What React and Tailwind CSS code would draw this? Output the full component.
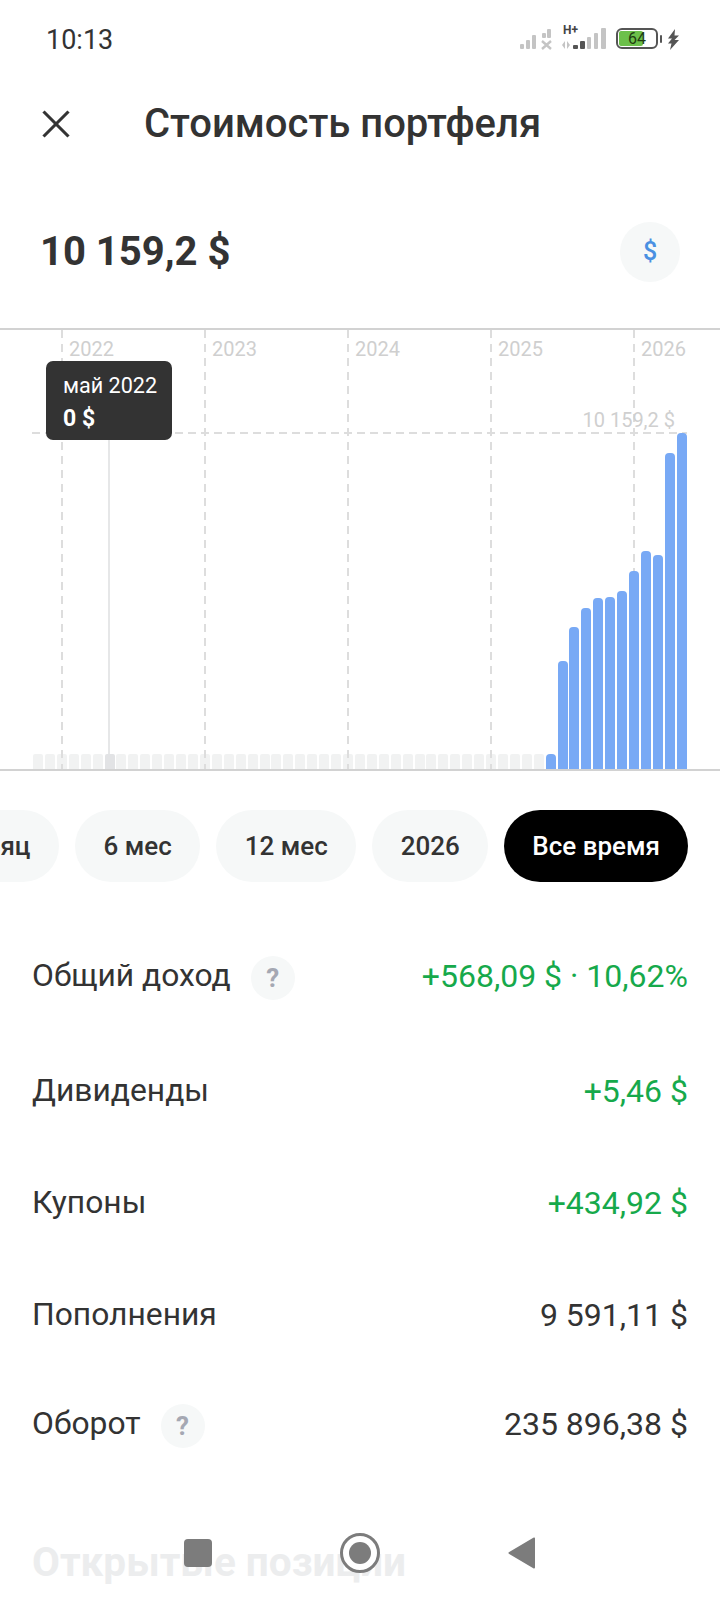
import React from 'react';
import { X } from 'lucide-react';

const years = [
  { label: '2022', left: 'left-[61px]' },
  { label: '2023', left: 'left-[204px]' },
  { label: '2024', left: 'left-[347px]' },
  { label: '2025', left: 'left-[490px]' },
  { label: '2026', left: 'left-[633px]' },
];

// heights in px from the chart baseline
const blueBars = [15, 108, 142, 161, 171, 172, 178, 198, 218, 214, 316, 336];
const greyBars = Array.from({ length: 43 }, (_, i) => i);

const periods = ['месяц', '6 мес', '12 мес', '2026'];

const rows = [
  { label: 'Общий доход', value: '+568,09 $ · 10,62%', green: true, hint: true, height: 'h-[114px]' },
  { label: 'Дивиденды', value: '+5,46 $', green: true, height: 'h-[115px]' },
  { label: 'Купоны', value: '+434,92 $', green: true, height: 'h-[110px]' },
  { label: 'Пополнения', value: '9 591,11 $', height: 'h-[114px]' },
  { label: 'Оборот', value: '235 896,38 $', hint: true, height: 'h-[104px]' },
];

const dashV = 'bg-[repeating-linear-gradient(to_bottom,#dddddd_0,#dddddd_8px,transparent_8px,transparent_14px)]';

function StatusIcons() {
  return (
    <div className="flex items-start">
      <svg width="90" height="32" viewBox="0 0 90 32" className="mr-[7px]">
        <g fill="#c4c4c4">
          <rect x="1" y="24" width="4" height="5" rx="1" />
          <rect x="7" y="20" width="4" height="9" rx="1" />
          <rect x="13" y="15" width="4" height="14" rx="1" />
          <rect x="23" y="13" width="4" height="5" rx="1" />
          <rect x="28" y="9" width="4" height="9" rx="1" />
        </g>
        <path d="M23 21l9 8M32 21l-9 8" stroke="#c4c4c4" strokeWidth="2.4" />
        <text x="44" y="14" fontSize="12" fontWeight="700" fill="#444444">H+</text>
        <path d="M46 21l-3 4 3 4zM48 21l3 4-3 4z" fill="#c4c4c4" />
        <rect x="54" y="25" width="5" height="4" rx="1" fill="#555555" />
        <rect x="61" y="21" width="5" height="8" rx="1" fill="#555555" />
        <rect x="68" y="17" width="4" height="12" rx="1" fill="#c4c4c4" />
        <rect x="75" y="13" width="4" height="16" rx="1" fill="#c4c4c4" />
        <rect x="82" y="8" width="5" height="21" rx="1" fill="#c4c4c4" />
      </svg>
      <div className="relative mt-[8px] flex h-[21px] w-[42px] items-center justify-center overflow-hidden rounded-[6px] border-2 border-[#555555]">
        <div className="absolute inset-y-[1px] left-[1px] w-[24px] rounded-[2px] bg-[#6cc04a]" />
        <span className="relative text-[16px] leading-none text-[#1f3d10]">64</span>
      </div>
      <div className="ml-[2px] mt-[15px] h-[8px] w-[2px] rounded-sm bg-[#555555]" />
      <svg width="13" height="21" viewBox="0 0 13 21" className="ml-[5px] mt-[9px]">
        <path d="M8 0L1 9.5h4L1 14.5h3.5L3 21l9-10H7.5L12 6.5H7.5z" fill="#555555" />
      </svg>
    </div>
  );
}

function HintButton() {
  return (
    <div className="ml-[20px] mt-[4px] flex h-[44px] w-[44px] items-center justify-center rounded-full bg-[#f6f8f8] text-[26px] font-bold leading-none text-[#a5a8b3]">
      ?
    </div>
  );
}

function Chart() {
  return (
    <div className="relative h-[443px] border-y-2 border-[#d2d2d2]">
      <div className="flex h-full items-end gap-[1.93px] pl-[33px]">
        {greyBars.map((i) => (
          <div
            key={i}
            className={`h-[15px] w-[10px] shrink-0 rounded-t-[2px] ${i === 6 ? 'bg-[#e2e3e5]' : 'bg-[#f1f2f2]'}`}
          />
        ))}
        {blueBars.map((h, i) => (
          <div
            key={i}
            className="relative z-10 w-[10px] shrink-0 rounded-t-[4px] bg-[#78a9f5]"
            style={{ height: h }}
          />
        ))}
      </div>

      {years.map((y) => (
        <React.Fragment key={y.label}>
          <div className={`absolute top-0 bottom-0 w-[2px] ${y.left} ${dashV}`} />
          <span className={`absolute top-[6px] ml-[8px] text-[20px] leading-[26px] text-[#cfcfcf] ${y.left}`}>
            {y.label}
          </span>
        </React.Fragment>
      ))}

      <div className="absolute left-[32px] right-[33px] top-[102px] h-[2px] bg-[repeating-linear-gradient(to_right,#dddddd_0,#dddddd_8px,transparent_8px,transparent_13px)]" />
      <span className="absolute right-[45px] top-[77px] text-[20px] leading-[26px] text-[#cfcfcf]">10 159,2 $</span>

      <div className="absolute left-[108px] top-[110px] bottom-[15px] w-[2px] bg-[#e6e7e8]" />

      <div className="absolute left-[46px] top-[31px] z-20 flex h-[79px] w-[126px] flex-col justify-center gap-[5px] rounded-[7px] bg-[#333333] pl-[17px] pt-[3px] text-white">
        <span className="text-[21.6px] leading-[28px]">май 2022</span>
        <span className="text-[23px] font-bold leading-[28px]">0 $</span>
      </div>
    </div>
  );
}

export default function App() {
  return (
    <div className="relative h-[1600px] w-[720px] overflow-hidden bg-white font-['Roboto',sans-serif] text-[#333333]">
      {/* status bar */}
      <div className="flex h-[80px] items-start justify-between pl-[46px] pr-[40px] pt-[20px]">
        <span className="text-[27px] leading-[40px]">10:13</span>
        <StatusIcons />
      </div>

      {/* header */}
      <div className="flex h-[88px] items-center pl-[31px]">
        <X size={50} strokeWidth={1.5} strokeLinecap="butt" className="text-[#333333]" />
        <h1 className="ml-[63px] text-[40px] font-medium leading-none">Стоимость портфеля</h1>
      </div>

      {/* total */}
      <div className="flex items-center justify-between pb-[46px] pl-[40px] pr-[40px] pt-[54px]">
        <span className="text-[40px] font-bold leading-[60px]">10 159,2 $</span>
        <div className="flex h-[60px] w-[60px] items-center justify-center rounded-full bg-[#f6f8f8] text-[25px] font-medium text-[#4a90e2]">
          $
        </div>
      </div>

      <Chart />

      {/* period pills */}
      <div className="mt-[39px] flex justify-end gap-[16px] pr-[32px]">
        {periods.map((p) => (
          <div key={p} className="flex h-[72px] shrink-0 items-center rounded-full bg-[#f6f8f8] px-[28.5px] text-[26px] font-medium">
            {p}
          </div>
        ))}
        <div className="flex h-[72px] shrink-0 items-center rounded-full bg-black px-[28px] text-[26px] font-medium text-white">
          Все время
        </div>
      </div>

      {/* summary rows */}
      <div className="mt-[37px] px-[32px]">
        {rows.map((r) => (
          <div key={r.label} className={`flex items-center justify-between ${r.height}`}>
            <div className="flex items-center">
              <span className="text-[31.8px] leading-none">{r.label}</span>
              {r.hint && <HintButton />}
            </div>
            <span className={`text-[32px] leading-none ${r.green ? 'text-[#16a94b]' : ''}`}>{r.value}</span>
          </div>
        ))}
      </div>

      <h2 className="mt-[64px] pl-[32px] text-[40.5px] font-bold leading-[44px] text-[#ecedee]">Открытые позиции</h2>

      {/* system nav over the page */}
      <div className="absolute left-[184px] top-[1539px] h-[28px] w-[28px] rounded-[4px] bg-[#7c7c7c]" />
      <div className="absolute left-[340px] top-[1533px] flex h-[40px] w-[40px] items-center justify-center rounded-full border-[3px] border-[#7c7c7c] bg-white">
        <div className="h-[22px] w-[22px] rounded-full bg-[#7c7c7c]" />
      </div>
      <svg width="28" height="32" viewBox="0 0 28 32" className="absolute left-[508px] top-[1537px]">
        <path d="M27 1.5v29a1 1 0 0 1-1.7.7L.8 16.7a1 1 0 0 1 0-1.4L25.3.8A1 1 0 0 1 27 1.5z" fill="#7c7c7c" />
      </svg>
    </div>
  );
}
